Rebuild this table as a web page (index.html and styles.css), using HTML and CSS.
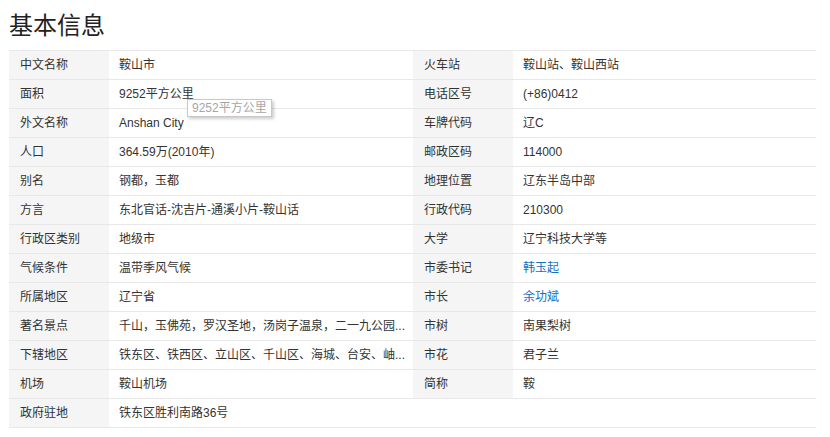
FILE: index.html
```html
<!DOCTYPE html>
<html lang="zh-CN">
<head>
<meta charset="utf-8">
<title>基本信息</title>
<link rel="stylesheet" href="styles.css">
</head>
<body>
<div class="page">
  <h2 class="title">基本信息</h2>
  <div class="info">
    <div class="row"><div class="lbl">中文名称</div><div class="val">鞍山市</div><div class="lbl">火车站</div><div class="val">鞍山站、鞍山西站</div></div>
    <div class="row"><div class="lbl">面积</div><div class="val">9252平方公里</div><div class="lbl">电话区号</div><div class="val">(+86)0412</div></div>
    <div class="row"><div class="lbl">外文名称</div><div class="val">Anshan City</div><div class="lbl">车牌代码</div><div class="val">辽C</div></div>
    <div class="row"><div class="lbl">人口</div><div class="val">364.59万(2010年)</div><div class="lbl">邮政区码</div><div class="val">114000</div></div>
    <div class="row"><div class="lbl">别名</div><div class="val">钢都，玉都</div><div class="lbl">地理位置</div><div class="val">辽东半岛中部</div></div>
    <div class="row"><div class="lbl">方言</div><div class="val">东北官话-沈吉片-通溪小片-鞍山话</div><div class="lbl">行政代码</div><div class="val">210300</div></div>
    <div class="row"><div class="lbl">行政区类别</div><div class="val">地级市</div><div class="lbl">大学</div><div class="val">辽宁科技大学等</div></div>
    <div class="row"><div class="lbl">气候条件</div><div class="val">温带季风气候</div><div class="lbl">市委书记</div><div class="val"><a class="link" href="#">韩玉起</a></div></div>
    <div class="row"><div class="lbl">所属地区</div><div class="val">辽宁省</div><div class="lbl">市长</div><div class="val"><a class="link" href="#">余功斌</a></div></div>
    <div class="row"><div class="lbl">著名景点</div><div class="val">千山，玉佛苑，罗汉圣地，汤岗子温泉，二一九公园<span class="dots">...</span></div><div class="lbl">市树</div><div class="val">南果梨树</div></div>
    <div class="row"><div class="lbl">下辖地区</div><div class="val">铁东区、铁西区、立山区、千山区、海城、台安、岫<span class="dots">...</span></div><div class="lbl">市花</div><div class="val">君子兰</div></div>
    <div class="row"><div class="lbl">机场</div><div class="val">鞍山机场</div><div class="lbl">简称</div><div class="val">鞍</div></div>
    <div class="row"><div class="lbl">政府驻地</div><div class="val">铁东区胜利南路36号</div><div class="empty"></div><div class="empty"></div></div>
    <div class="tip">9252平方公里</div>
  </div>
</div>
</body>
</html>
```

FILE: styles.css
```css
html, body {
  margin: 0;
  padding: 0;
  background: #fff;
}
body {
  font-family: "Liberation Sans", Arial, "Noto Sans CJK SC", sans-serif;
  font-size: 12px;
  color: #333;
}
.page {
  padding: 0 14px 0 9px;
}
.title {
  margin: 0;
  height: 50px;
  line-height: 48px;
  font-size: 24px;
  font-weight: normal;
  color: #222;
  font-family: "Noto Sans CJK SC", sans-serif;
}
.info {
  position: relative;
  border-top: 1px solid #e8e8e8;
}
.row {
  display: grid;
  grid-template-columns: 100px 304px 100px 303px;
  height: 28px;
  border-bottom: 1px solid #e8e8e8;
}
.lbl, .val {
  line-height: 28px;
  white-space: nowrap;
  overflow: hidden;
}
.lbl {
  background: #f5f5f5;
  padding-left: 11px;
}
.val {
  padding-left: 10px;
  padding-right: 7px;
}
.dots {
  letter-spacing: 0;
}
.link {
  color: #136ec2;
  text-decoration: none;
}
.tip {
  position: absolute;
  left: 178px;
  top: 48px;
  height: 16px;
  line-height: 16px;
  padding: 0 4px;
  border: 1px solid #c8c8c8;
  background: #fff;
  color: #a6a6a6;
  box-shadow: 2px 2px 3px rgba(0, 0, 0, 0.2);
}
```
